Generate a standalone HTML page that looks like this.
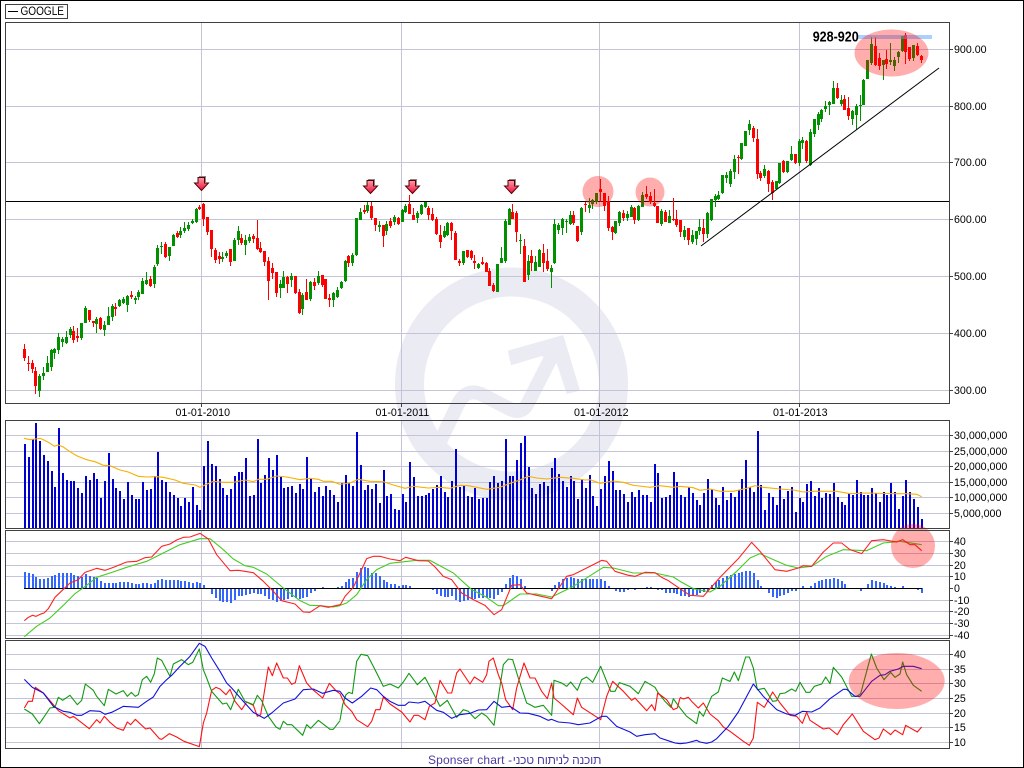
<!DOCTYPE html>
<html><head><meta charset="utf-8"><title>GOOGLE</title>
<style>
html,body{margin:0;padding:0;background:#fff;width:1024px;height:768px;overflow:hidden}
svg{position:absolute;left:0;top:0;display:block}
text{font-family:"Liberation Sans",sans-serif;font-size:10.67px;fill:#000}
#f{position:absolute;left:428px;top:753px;white-space:nowrap;font:12px "Liberation Sans",sans-serif;letter-spacing:.15px;color:#4a3ea0}
#f span{letter-spacing:-.2px;margin-left:-3px}
.l{fill:none;stroke-width:3.3;stroke-linejoin:round}
</style></head><body>
<svg width="1024" height="768" viewBox="0 0 1024 768" xmlns="http://www.w3.org/2000/svg">
<defs><linearGradient id="g" x1="0" y1="0" x2="0" y2="1"><stop offset="0" stop-color="#ff9aa8"/><stop offset="1" stop-color="#ee1040"/></linearGradient></defs>
<rect x=".5" y=".5" width="1023" height="767" fill="#fff" stroke="#000"/>
<!-- watermark -->
<g fill="none" stroke="#ebebf4">
<circle cx="511.5" cy="384" r="102" stroke-width="29"/>
<path d="M436 450L458 404Q466 388 481 394L510 409Q522 415 528 403L555 350" stroke-width="14"/>
</g>
<path d="M563.3 335L507.7 350.7L511 365.3L541.7 356L556.7 363.3L566.7 394L580 390.7Z" fill="#ebebf4"/>
<!-- grid -->
<path d="M5 49.5H949M5 106.5H949M5 162.5H949M5 219.5H949M5 276.5H949M5 333.5H949M5 390.5H949M5 435.5H949M5 451.5H949M5 466.5H949M5 482.5H949M5 497.5H949M5 513.5H949M5 541.5H949M5 553.5H949M5 565.5H949M5 576.5H949M5 600.5H949M5 611.5H949M5 623.5H949M5 635.5H949M5 654.5H949M5 669.5H949M5 683.5H949M5 698.5H949M5 713.5H949M5 727.5H949M5 742.5H949M201.5 22V403M401.5 22V403M599.5 22V403M799.5 22V403M201.5 420V528M401.5 420V528M599.5 420V528M799.5 420V528M201.5 530V638M401.5 530V638M599.5 530V638M799.5 530V638M201.5 640V748M401.5 640V748M599.5 640V748M799.5 640V748" stroke="#c4c4d8" fill="none" shape-rendering="crispEdges"/>
<path d="M5 201.5H949" stroke="#000" shape-rendering="crispEdges"/>
<!-- candle wicks -->
<path fill="none" stroke="#f00" shape-rendering="crispEdges" d="M24.5 344V361M28.5 356V371M32.5 360V373M35.5 367V394M73.5 326V343M77.5 328V342M89.5 310V322M93.5 321V327M100.5 317V330M115.5 303V316M131.5 291V299M150.5 276V287M165.5 242V258M177.5 231V238M199.5 205V210M203.5 203V226M207.5 217V235M211.5 230V257M215.5 248V263M219.5 252V264M230.5 249V266M241.5 234V245M253.5 234V243M257.5 220V250M260.5 242V253M264.5 251V266M268.5 257V300M272.5 263V279M276.5 272V297M287.5 276V293M295.5 276V294M299.5 289V314M306.5 279V300M314.5 278V290M322.5 275V287M325.5 279V299M329.5 294V307M348.5 255V267M364.5 205V214M371.5 202V220M375.5 218V231M383.5 225V247M390.5 218V228M398.5 217V225M409.5 195V214M413.5 208V220M428.5 206V220M432.5 208V221M436.5 217V235M440.5 225V248M451.5 222V240M455.5 231V260M459.5 259V266M467.5 250V258M471.5 250V260M474.5 255V269M482.5 257V265M486.5 262V272M489.5 268V286M493.5 283V292M512.5 204V219M516.5 211V242M524.5 239V282M531.5 250V271M543.5 244V272M547.5 249V271M573.5 211V225M577.5 226V242M585.5 202V212M600.5 179V202M604.5 193V211M608.5 196V231M612.5 226V240M623.5 210V221M634.5 207V224M646.5 186V199M650.5 192V204M654.5 189V207M657.5 206V223M665.5 210V222M673.5 198V221M676.5 210V227M680.5 220V237M688.5 228V245M703.5 219V242M738.5 155V174M753.5 126V142M757.5 129V179M760.5 171V181M768.5 170V192M772.5 180V200M783.5 160V173M795.5 154V164M806.5 140V163M837.5 83V99M844.5 95V110M848.5 97V120M875.5 37V66M879.5 53V70M886.5 50V69M905.5 33V64M909.5 47V61M917.5 43V56M921.5 55V63"/>
<path fill="none" stroke="#009000" shape-rendering="crispEdges" d="M39.5 374V397M43.5 367V380M47.5 356V372M51.5 349V371M54.5 348V359M58.5 333V354M62.5 337V347M66.5 331V344M70.5 327V338M81.5 323V340M85.5 306V323M96.5 317V333M104.5 321V336M108.5 307V325M112.5 304V321M119.5 299V307M123.5 297V304M127.5 295V312M135.5 296V304M138.5 290V300M142.5 278V294M146.5 272V285M154.5 265V288M157.5 245V266M161.5 242V254M169.5 247V261M173.5 234V246M180.5 227V238M184.5 222V233M188.5 222V231M192.5 219V224M196.5 208V223M222.5 252V262M226.5 251V258M234.5 238V261M238.5 226V245M245.5 235V255M249.5 234V243M280.5 280V298M283.5 271V288M291.5 273V287M302.5 293V315M310.5 281V301M318.5 271V285M333.5 292V307M337.5 287V298M341.5 281V289M345.5 260V282M352.5 253V266M356.5 218V256M360.5 208V220M367.5 202V213M379.5 221V232M386.5 221V235M394.5 215V225M402.5 209V222M405.5 204V213M417.5 211V223M421.5 204V215M425.5 202V208M444.5 226V238M447.5 222V236M463.5 251V265M478.5 263V269M497.5 264V292M501.5 247V263M505.5 219V263M509.5 208V225M520.5 234V254M528.5 255V280M535.5 256V271M539.5 249V267M551.5 265V288M554.5 219V264M558.5 223V234M562.5 218V235M566.5 219V233M570.5 211V225M581.5 207V235M589.5 198V213M592.5 199V209M596.5 193V204M615.5 221V234M619.5 211V226M627.5 211V221M631.5 205V217M638.5 205V221M642.5 192V207M661.5 209V226M669.5 210V223M684.5 226V240M692.5 230V244M696.5 231V245M699.5 219V235M707.5 212V238M711.5 199V221M715.5 194V207M718.5 191V200M722.5 175V194M726.5 172V183M730.5 169V187M734.5 155V179M741.5 143V160M745.5 131V146M749.5 120V135M764.5 165V178M776.5 181V190M779.5 163V184M787.5 161V173M791.5 146V161M799.5 139V166M802.5 137V149M810.5 129V166M814.5 119V137M818.5 112V130M821.5 109V122M825.5 101V112M829.5 101V115M833.5 81V104M841.5 95V106M852.5 110V125M856.5 104V130M860.5 95V121M863.5 79V105M867.5 60V79M871.5 37V65M883.5 60V80M890.5 43V65M894.5 57V71M898.5 51V63M902.5 36V52M913.5 45V61"/>
<!-- candle bodies -->
<path fill="none" stroke="#f00" stroke-width="3" shape-rendering="crispEdges" d="M24.5 349V358M28.5 363V364M32.5 363V369M35.5 371V386M73.5 331V340M77.5 336V338M89.5 310V320M93.5 321V323M100.5 318V329M115.5 307V309M131.5 295V297M150.5 279V286M165.5 244V257M177.5 233V237M199.5 207V209M203.5 204V219M207.5 217V232M211.5 230V249M215.5 250V260M219.5 256V259M230.5 249V262M241.5 238V243M253.5 236V239M257.5 238V249M260.5 248V252M264.5 251V262M268.5 261V281M272.5 268V273M276.5 272V293M287.5 277V284M295.5 276V293M299.5 292V313M306.5 292V300M314.5 282V286M322.5 275V285M325.5 279V299M329.5 298V300M348.5 256V263M364.5 210V212M371.5 206V218M375.5 218V225M383.5 225V236M390.5 221V226M398.5 218V224M409.5 204V214M413.5 215V220M428.5 208V215M432.5 214V220M436.5 219V234M440.5 235V242M451.5 223V231M455.5 233V260M459.5 261V263M467.5 250V257M471.5 251V258M474.5 261V263M482.5 262V264M486.5 263V272M489.5 271V286M493.5 285V291M512.5 212V219M516.5 213V232M524.5 246V282M531.5 256V263M543.5 253V263M547.5 261V269M573.5 215V223M577.5 226V241M585.5 204V205M600.5 189V192M604.5 193V206M608.5 201V228M612.5 227V232M623.5 213V218M634.5 208V220M646.5 194V197M650.5 196V202M654.5 203V206M657.5 206V223M665.5 212V222M673.5 219V220M676.5 219V225M680.5 220V232M688.5 228V240M703.5 228V234M738.5 157V158M753.5 128V138M757.5 139V174M760.5 173V178M768.5 171V184M772.5 182V193M783.5 161V172M795.5 154V163M806.5 141V161M837.5 88V98M844.5 99V110M848.5 108V116M875.5 46V65M879.5 58V66M886.5 59V64M905.5 35V52M909.5 47V59M917.5 46V55M921.5 56V60"/>
<path fill="none" stroke="#009000" stroke-width="3" shape-rendering="crispEdges" d="M39.5 376V391M43.5 373V376M47.5 363V372M51.5 350V367M54.5 349V353M58.5 337V350M62.5 339V342M66.5 337V343M70.5 329V335M81.5 323V338M85.5 308V323M96.5 319V324M104.5 325V330M108.5 316V325M112.5 306V317M119.5 300V306M123.5 299V303M127.5 296V305M135.5 298V300M138.5 292V297M142.5 281V294M146.5 280V284M154.5 267V284M157.5 248V264M161.5 246V247M169.5 247V256M173.5 235V246M180.5 231V235M184.5 228V231M188.5 225V229M192.5 221V223M196.5 209V222M222.5 257V259M226.5 253V256M234.5 240V261M238.5 231V240M245.5 240V245M249.5 237V241M280.5 284V288M283.5 277V288M291.5 276V280M302.5 295V309M310.5 282V299M318.5 276V283M333.5 293V300M337.5 290V297M341.5 282V288M345.5 261V281M352.5 255V263M356.5 218V255M360.5 212V220M367.5 205V211M379.5 225V227M386.5 224V231M394.5 217V222M402.5 210V222M405.5 206V212M417.5 213V218M421.5 205V214M425.5 202V207M444.5 231V237M447.5 223V235M463.5 251V263M478.5 264V268M497.5 264V292M501.5 258V263M505.5 221V261M509.5 209V225M520.5 240V241M528.5 261V275M535.5 262V271M539.5 250V267M551.5 268V272M554.5 224V263M558.5 225V230M562.5 219V228M566.5 221V222M570.5 215V224M581.5 208V232M589.5 205V208M592.5 200V204M596.5 193V202M615.5 221V233M619.5 212V223M627.5 214V218M631.5 207V217M638.5 206V220M642.5 195V207M661.5 211V224M669.5 216V223M684.5 230V237M692.5 235V242M696.5 231V239M699.5 227V231M707.5 213V234M711.5 199V220M715.5 196V200M718.5 195V199M722.5 175V193M726.5 175V178M730.5 171V184M734.5 159V172M741.5 143V159M745.5 131V146M749.5 124V130M764.5 169V176M776.5 181V189M779.5 163V183M787.5 161V172M791.5 154V160M799.5 141V163M802.5 140V143M810.5 132V165M814.5 119V134M818.5 114V125M821.5 110V119M825.5 106V109M829.5 102V105M833.5 88V104M841.5 100V104M852.5 111V119M856.5 106V115M860.5 105V106M863.5 80V105M867.5 60V79M871.5 44V63M883.5 60V65M890.5 60V62M894.5 60V66M898.5 52V57M902.5 36V51M913.5 45V58"/>
<!-- trend line -->
<path d="M701 246L939 68" stroke="#000" fill="none"/>
<!-- arrows -->
<g stroke-linejoin="miter">
<path d="M199 176.5H205.5V182" fill="none" stroke="#888"/><path d="M198 177.5H204.5V183H208.5L201.5 190.5L194.5 183H198Z" fill="url(#g)" stroke="#500"/>
<path d="M368 179.5H374.5V185" fill="none" stroke="#888"/><path d="M367 180.5H373.5V186H377.5L370.5 193.5L363.5 186H367Z" fill="url(#g)" stroke="#500"/>
<path d="M410 179.5H416.5V185" fill="none" stroke="#888"/><path d="M409 180.5H415.5V186H419.5L412.5 193.5L405.5 186H409Z" fill="url(#g)" stroke="#500"/>
<path d="M509 179.5H515.5V185" fill="none" stroke="#888"/><path d="M508 180.5H514.5V186H518.5L511.5 193.5L504.5 186H508Z" fill="url(#g)" stroke="#500"/>
</g>
<!-- volume -->
<path fill="none" stroke="#0000d0" stroke-width="2" shape-rendering="crispEdges" d="M25 444V528M29 457V528M33 439V528M36 423V528M40 441V528M44 455V528M48 461V528M52 471V528M55 487V528M59 428V528M63 473V528M67 480V528M71 481V528M74 481V528M78 488V528M82 493V528M86 476V528M90 480V528M94 473V528M97 479V528M101 498V528M105 481V528M109 453V528M113 479V528M116 488V528M120 491V528M124 499V528M128 482V528M132 495V528M136 499V528M139 499V528M143 482V528M147 490V528M151 489V528M155 476V528M158 452V528M162 480V528M166 482V528M170 492V528M174 495V528M178 498V528M181 506V528M185 498V528M189 502V528M193 487V528M197 505V528M200 510V528M204 466V528M208 441V528M212 464V528M216 466V528M220 479V528M223 488V528M227 495V528M231 489V528M235 476V528M239 472V528M242 472V528M246 458V528M250 496V528M254 495V528M258 439V528M261 483V528M265 475V528M269 458V528M273 470V528M277 455V528M281 477V528M284 488V528M288 487V528M292 486V528M296 493V528M300 484V528M303 489V528M307 457V528M311 478V528M315 492V528M319 487V528M323 496V528M326 486V528M330 490V528M334 495V528M338 502V528M342 483V528M346 475V528M349 483V528M353 486V528M357 432V528M361 465V528M365 490V528M368 485V528M372 489V528M376 484V528M380 503V528M384 470V528M387 496V528M391 494V528M395 509V528M399 510V528M403 494V528M406 502V528M410 462V528M414 477V528M418 496V528M422 496V528M426 495V528M429 493V528M433 489V528M437 485V528M441 476V528M445 492V528M448 497V528M452 481V528M456 449V528M460 487V528M464 486V528M468 496V528M472 497V528M475 488V528M479 499V528M483 498V528M487 498V528M490 482V528M494 476V528M498 483V528M502 481V528M506 439V528M510 476V528M513 476V528M517 460V528M521 443V528M525 436V528M529 467V528M532 488V528M536 494V528M540 484V528M544 482V528M548 486V528M552 468V528M555 458V528M559 474V528M563 481V528M567 487V528M571 476V528M574 481V528M578 499V528M582 479V528M586 488V528M590 475V528M593 496V528M597 506V528M601 489V528M605 476V528M609 461V528M613 471V528M616 490V528M620 490V528M624 494V528M628 502V528M632 492V528M635 497V528M639 490V528M643 495V528M647 495V528M651 502V528M655 464V528M658 473V528M662 498V528M666 497V528M670 495V528M674 472V528M677 482V528M681 495V528M685 497V528M689 487V528M693 493V528M697 500V528M700 505V528M704 493V528M708 479V528M712 489V528M716 498V528M719 505V528M723 487V528M727 500V528M731 493V528M735 497V528M739 490V528M742 479V528M746 460V528M750 487V528M754 492V528M758 431V528M761 485V528M765 510V528M769 493V528M773 497V528M777 505V528M780 486V528M784 499V528M788 491V528M792 487V528M796 512V528M800 498V528M803 502V528M807 484V528M811 481V528M815 496V528M819 488V528M822 498V528M826 493V528M830 494V528M834 483V528M838 497V528M842 502V528M845 505V528M849 493V528M853 495V528M857 480V528M861 492V528M864 495V528M868 495V528M872 488V528M876 493V528M880 502V528M884 492V528M887 495V528M891 483V528M895 492V528M899 509V528M903 496V528M906 480V528M910 492V528M914 499V528M918 507V528M922 519V528"/>
<polyline fill="none" stroke="#f8b000" stroke-width="1.1" points="24,438.3 30,439.7 35,439 40,438.3 44,440 50,443.3 54.3,446.3 58.3,445 63.3,447 70,451.7 76.7,455.7 86.7,459.7 95,461.7 103.3,465.3 110,465.7 120,470 128.3,472 138.3,476.3 146.7,477 156.7,476.7 163.3,477.3 175,480 183.3,483.3 195,485 200,487.3 205,485 213.3,481.3 223.3,482.3 233.3,482.3 245,480 253.3,481.7 258.3,479.3 266.7,479.3 276.7,476 286.7,477 300,479.7 310,478.3 318.3,479.3 323.3,481.3 331.7,481.3 340,484.3 350,483 358.3,479.3 370,481.3 383.3,481.7 393.3,485 405,488.3 413.3,486.3 428.3,488 440,487.3 450,488.3 460,485.3 468.3,485.7 476.7,487.3 486.7,489.3 500,487.3 510,483.3 520,480 528.3,476.3 536.7,478 546.7,479 560,477.3 573.3,478.3 585,480 590,479.7 600,483.3 613.3,481 623.3,482.3 633.3,485.3 650,487.3 660,485.7 673.3,487.3 680,486.3 693.3,487.7 700,490.3 710,489 720,491.3 733.3,491.3 746.7,488.3 755,485.7 763.3,487.3 780,489 793.3,490 803.3,492 813.3,491.3 836.7,491.3 850,493.7 866.7,493 893.3,493.7 906.7,493.7 916.7,494.3 921.7,496.7"/>
<!-- macd histogram -->
<path fill="none" stroke="#3366ff" stroke-width="2" shape-rendering="crispEdges" d="M25 572V588M29 573V588M33 574V588M36 577V588M40 579V588M44 579V588M48 578V588M52 576V588M55 575V588M59 573V588M63 573V588M67 573V588M71 573V588M74 575V588M78 576V588M82 577V588M86 574V588M90 576V588M94 577V588M97 578V588M101 581V588M105 583V588M109 583V588M113 583V588M116 583V588M120 582V588M124 582V588M128 582V588M132 583V588M136 584V588M139 584V588M143 583V588M147 583V588M151 584V588M155 583V588M158 580V588M162 579V588M166 580V588M170 580V588M174 580V588M178 580V588M181 581V588M185 581V588M189 582V588M193 583V588M197 582V588M200 583V588M204 585V588M212 588V594M216 588V598M220 588V601M223 588V602M227 588V602M231 588V603M235 588V600M239 588V596M242 588V596M246 588V595M250 588V594M254 588V593M258 588V594M261 588V594M265 588V596M269 588V599M273 588V600M277 588V602M281 588V601M284 588V600M288 588V599M292 588V597M296 588V598M300 588V599M303 588V598M307 588V597M311 588V593M315 588V591M323 587V588M338 587V588M342 586V588M346 582V588M349 579V588M353 578V588M357 572V588M361 568V588M365 567V588M368 568V588M372 573V588M376 573V588M380 576V588M384 580V588M387 582V588M391 584V588M395 584V588M399 586V588M403 585V588M406 585V588M410 586V588M433 588V590M437 588V594M441 588V596M445 588V597M448 588V597M452 588V596M456 588V600M460 588V602M464 588V601M468 588V600M472 588V599M475 588V599M479 588V598M483 588V598M487 588V598M490 588V598M494 588V599M498 588V595M502 588V592M506 584V588M510 578V588M513 575V588M517 576V588M521 579V588M525 586V588M536 588V589M548 588V589M552 588V591M555 585V588M559 582V588M563 579V588M567 578V588M571 577V588M574 578V588M578 579V588M582 579V588M586 579V588M590 579V588M593 579V588M597 579V588M601 579V588M605 581V588M609 586V588M613 588V589M616 588V591M620 588V592M624 588V592M628 588V590M632 588V589M635 588V590M639 588V589M647 587V588M651 587V588M658 588V590M662 588V590M666 588V593M670 588V593M674 588V593M677 588V594M681 588V596M685 588V596M689 588V597M693 588V596M697 588V595M700 588V593M704 588V592M708 588V592M712 585V588M716 582V588M719 580V588M723 578V588M727 576V588M731 575V588M735 574V588M739 573V588M742 572V588M746 571V588M750 571V588M754 573V588M758 580V588M761 586V588M769 588V593M773 588V597M777 588V598M780 588V596M784 588V595M788 588V593M792 588V591M796 588V591M803 586V588M811 586V588M815 583V588M819 581V588M822 580V588M826 579V588M830 579V588M834 578V588M838 579V588M842 581V588M845 584V588M853 588V589M857 588V589M861 588V591M868 584V588M872 580V588M876 581V588M880 582V588M884 583V588M887 585V588M891 586V588M895 587V588M903 586V588M910 588V589M914 588V589M918 588V590M922 588V593"/>
<path d="M24 588.5H922" stroke="#000" shape-rendering="crispEdges"/>
<!-- macd lines + dmi lines (zoom-unit groups) -->
<g transform="translate(0 528) scale(.33333)">
<polyline class="l" stroke="#44cc22" points="73,326 110,295 150,270 190,232 225,197 260,172 290,148 330,135 380,118 440,100 480,80 540,50 600,32 630,32 670,65 700,93 735,113 760,118 800,138 850,180 900,218 930,232 960,233 1000,237 1020,233"/>
<polyline class="l" stroke="#f22" points="73,278 85,268 97,262 108,265 120,259 132,255 145,242 165,208 190,184 210,165 235,155 255,133 290,121 315,127 340,118 380,102 410,100 435,89 455,87 485,55 510,48 530,36 550,28 570,27 600,16 625,33 650,80 690,128 715,127 760,134 790,160 820,190 845,218 885,228 910,252 930,253 960,233 985,238 1020,230"/>
<polyline class="l" stroke="#f11" points="73,540 85,520 97,520 106,478 130,495 160,530 175,548 210,570 220,565 268,602 290,575 300,585 313,565 330,583 350,600 370,607 382,582 392,590 406,574 437,603 450,600 478,632 485,634 508,617 530,627 552,640 598,656 610,585 620,555 635,487 648,478 660,483 678,500 690,484 705,520 725,545 740,522 760,532 772,565 782,560 805,417 817,443 830,405 850,450 862,450 875,469 886,464 898,413 920,465 935,482 968,510 988,466 1010,490 1020,497"/>
<polyline class="l" stroke="#119911" points="73,543 97,558 118,587 130,570 150,540 165,538 175,508 188,517 210,502 232,530 245,517 256,468 280,487 290,505 313,533 325,484 348,498 370,488 382,505 394,493 406,505 415,500 427,455 440,445 452,463 463,437 472,390 485,397 510,445 520,408 545,395 565,410 578,403 598,363 610,425 620,450 635,490 668,528 680,525 692,545 715,484 735,520 760,530 772,502 785,518 805,565 828,597 840,604 850,580 862,590 875,590 908,622 920,590 932,601 955,577 990,604 1000,604 1020,578"/>
<polyline class="l" stroke="#1111dd" points="73,454 97,478 130,495 160,535 190,550 210,553 230,562 245,562 270,548 300,550 315,559 335,553 370,535 415,538 440,520 460,507 480,475 500,455 515,442 540,415 570,385 598,346 615,355 635,390 660,430 680,465 695,480 730,520 760,553 793,571 815,555 850,525 885,513 910,485 940,483 968,496 1000,487 1020,490"/>
</g>
<g transform="translate(340 528) scale(.33333)">
<polyline class="l" stroke="#44cc22" points="0,232 20,225 50,200 80,155 110,125 150,106 230,97 270,97 340,135 395,185 435,205 475,233 490,233 540,198 590,198 635,207 700,175 790,118 820,120 880,135 945,135 1000,147 1020,160"/>
<polyline class="l" stroke="#f22" points="0,232 15,205 40,178 80,92 100,85 120,85 150,93 180,98 197,88 235,98 265,99 285,117 310,145 335,155 365,195 400,215 435,232 462,260 485,245 515,172 540,170 560,195 590,202 635,212 680,145 700,140 740,120 785,97 800,100 825,130 865,142 885,145 915,133 945,134 965,148 985,158 1020,182"/>
<polyline class="l" stroke="#119911" points="0,577 8,530 18,500 27,493 37,497 50,400 63,379 83,383 100,415 130,475 150,468 175,480 190,462 207,436 232,470 255,448 280,495 300,535 322,517 350,568 370,545 385,550 405,572 425,555 440,565 462,592 490,410 505,393 518,395 535,450 560,525 570,530 585,538 610,532 635,562 642,457 665,465 680,475 692,462 712,487 725,455 740,447 758,463 782,415 800,460 812,490 825,490 838,464 870,475 895,497 915,460 945,478 955,495 975,520 993,538 1000,512 1020,540"/>
<polyline class="l" stroke="#f11" points="0,497 15,530 35,550 50,575 83,596 95,580 107,545 120,545 130,507 150,528 185,552 210,582 222,562 235,562 255,575 268,535 285,525 300,457 323,495 335,495 350,435 360,423 390,468 403,447 428,463 440,440 447,400 460,390 475,440 485,465 497,515 518,545 530,480 552,405 570,450 585,450 605,490 622,512 635,465 642,510 660,525 700,560 712,510 725,538 782,575 800,505 818,460 850,490 875,517 885,510 920,548 935,530 945,548 953,495 980,515 1000,545 1012,540 1020,510"/>
<polyline class="l" stroke="#1111dd" points="0,490 15,510 37,525 65,505 92,480 110,485 130,505 150,520 175,532 195,532 207,522 235,525 255,520 290,547 310,553 335,571 360,560 390,556 415,546 440,545 462,520 485,538 510,535 540,555 565,556 600,565 625,577 635,574 655,582 690,585 715,590 750,585 785,565 800,565 830,595 870,612 890,625 915,620 945,617 960,630 990,640 1005,645 1020,647"/>
</g>
<g transform="translate(680 528) scale(.33333)">
<polyline class="l" stroke="#44cc22" points="0,160 40,182 90,192 120,175 170,130 210,90 240,77 280,95 320,112 355,120 395,115 440,85 490,65 560,68 610,45 660,40 725,50"/>
<polyline class="l" stroke="#f22" points="0,182 30,202 70,205 120,148 175,92 215,43 240,70 285,125 320,130 355,120 370,113 395,115 430,72 460,45 485,45 510,65 545,77 575,38 610,35 650,42 668,35 690,50 705,50 725,68"/>
<polyline class="l" stroke="#f11" points="0,508 10,513 25,508 35,520 55,540 70,525 90,558 115,578 130,597 150,610 190,640 208,652 220,630 232,523 253,538 278,492 300,525 330,562 350,565 367,586 380,553 390,577 430,603 447,600 472,620 490,590 517,558 550,610 585,635 597,630 610,603 632,620 645,606 668,620 677,592 712,612 725,597"/>
<polyline class="l" stroke="#119911" points="0,540 20,565 50,587 58,550 70,565 95,505 115,492 127,450 150,460 163,432 175,458 197,387 208,387 220,420 232,485 253,481 278,520 290,518 300,497 315,495 335,483 347,490 360,463 378,493 390,493 403,475 425,468 437,447 450,467 460,418 485,447 515,505 530,505 542,497 574,378 590,420 612,455 632,433 645,448 660,438 668,402 680,440 700,472 725,490"/>
<polyline class="l" stroke="#1111dd" points="0,647 20,645 50,637 60,642 80,646 95,642 110,632 145,595 175,552 220,468 250,505 290,545 320,558 345,562 367,550 395,552 420,540 450,512 490,484 500,484 525,505 540,505 575,460 600,442 615,440 630,430 655,423 670,415 700,415 725,422"/>
</g>
<!-- 928-920 band -->
<rect x="858" y="35" width="74" height="4" fill="#6fb0ff" opacity=".6"/>
<!-- highlights -->
<g fill="#ff0000" opacity=".32">
<ellipse cx="891.5" cy="53" rx="37" ry="23.5"/>
<circle cx="598" cy="191.5" r="15.5"/>
<ellipse cx="650" cy="192" rx="14.5" ry="14.5"/>
<circle cx="913" cy="546" r="22"/>
<ellipse cx="896.7" cy="681" rx="48" ry="28"/>
</g>
<!-- panel borders -->
<g fill="none" stroke="#404040" shape-rendering="crispEdges">
<rect x="5.5" y="22.5" width="944" height="381"/>
<rect x="5.5" y="420.5" width="944" height="108"/>
<rect x="5.5" y="530.5" width="944" height="108"/>
<rect x="5.5" y="640.5" width="944" height="108"/>
<rect x="5.5" y="4.5" width="62" height="14"/>
<path d="M201.5 403V407M401.5 403V407M599.5 403V407M799.5 403V407M949 49.5H953M949 106.5H953M949 162.5H953M949 219.5H953M949 276.5H953M949 333.5H953M949 390.5H953M949 435.5H953M949 451.5H953M949 466.5H953M949 482.5H953M949 497.5H953M949 513.5H953M949 541.5H953M949 553.5H953M949 565.5H953M949 576.5H953M949 588.5H953M949 600.5H953M949 611.5H953M949 623.5H953M949 635.5H953M949 654.5H953M949 669.5H953M949 683.5H953M949 698.5H953M949 713.5H953M949 727.5H953M949 742.5H953"/>
</g>
<path d="M8 11.5H18" stroke="#000" shape-rendering="crispEdges"/>
<text x="20.5" y="15" textLength="43.5" lengthAdjust="spacingAndGlyphs" style="font-size:11.5px">GOOGLE</text>
<text x="812.7" y="41.5" textLength="46" lengthAdjust="spacingAndGlyphs" style="font-size:15px;font-weight:bold">928-920</text>
<!-- labels -->
<text x="175.5" y="416">01-01-2010</text><text x="375.5" y="416">01-01-2011</text><text x="574" y="416">01-01-2012</text><text x="773" y="416">01-01-2013</text>
<text x="954" y="53">900.00</text><text x="954" y="110">800.00</text><text x="954" y="166">700.00</text><text x="954" y="223">600.00</text><text x="954" y="280">500.00</text><text x="954" y="337">400.00</text><text x="954" y="394">300.00</text>
<text x="954" y="439">30,000,000</text><text x="954" y="455">25,000,000</text><text x="954" y="470">20,000,000</text><text x="954" y="486">15,000,000</text><text x="954" y="501">10,000,000</text><text x="954" y="517">5,000,000</text>
<text x="954" y="545">40</text><text x="954" y="557">30</text><text x="954" y="569">20</text><text x="954" y="580">10</text><text x="954" y="592">0</text><text x="954" y="604">-10</text><text x="954" y="615">-20</text><text x="954" y="627">-30</text><text x="954" y="639">-40</text>
<text x="954" y="658">40</text><text x="954" y="673">35</text><text x="954" y="687">30</text><text x="954" y="702">25</text><text x="954" y="717">20</text><text x="954" y="731">15</text><text x="954" y="746">10</text>
</svg>
<div id="f">Sponser chart - <span>תוכנה לניתוח טכני</span></div>
</body></html>
